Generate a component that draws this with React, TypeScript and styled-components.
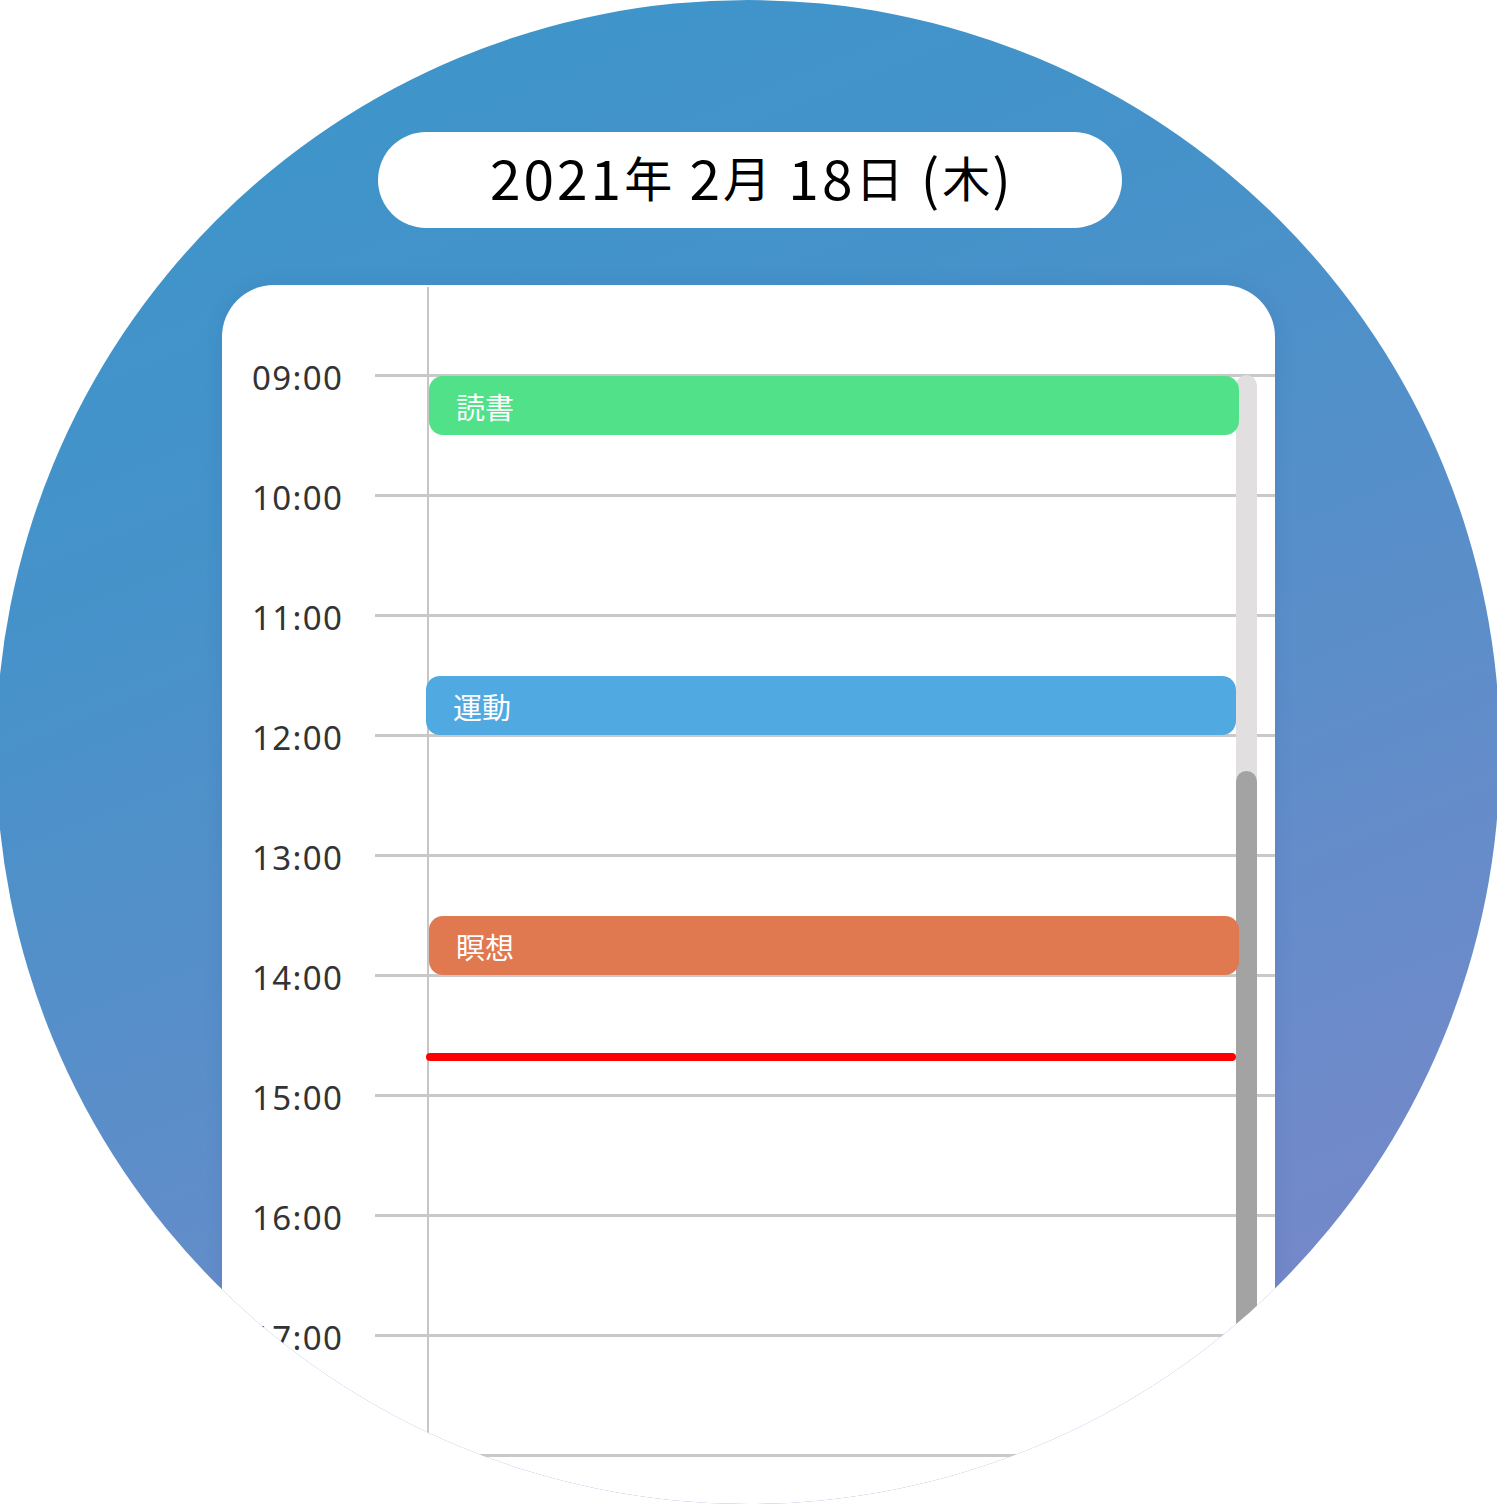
import React from "react";
import styled, { createGlobalStyle } from "styled-components";

const GlobalStyle = createGlobalStyle`
  html, body {
    margin: 0;
    padding: 0;
    background: #ffffff;
    overflow: hidden;
  }
  body {
    font-family: "Noto Sans", "Noto Sans CJK JP", sans-serif;
  }
`;

const Page = styled.div`
  width: 1497px;
  height: 1504px;
  overflow: hidden;
  background: #ffffff;
`;

const Circle = styled.div`
  width: 1504px;
  height: 1504px;
  margin-left: -4px;
  border-radius: 50%;
  overflow: hidden;
  background: linear-gradient(158deg, #3b96ca 0%, #4592c9 30%, #5d8ec9 58%, #6f8ac9 78%, #7c85c8 100%);
  display: flex;
  flex-direction: column;
  align-items: center;
`;

const DatePill = styled.div`
  margin-top: 132px;
  margin-left: 4px;
  width: 744px;
  height: 96px;
  box-sizing: border-box;
  padding-bottom: 8px;
  padding-left: 4px;
  border-radius: 48px;
  background: #ffffff;
  display: flex;
  align-items: center;
  justify-content: center;
  font-family: "Noto Sans CJK JP", "Noto Sans", sans-serif;
  font-size: 55px;
  font-weight: 400;
  color: #000000;
  letter-spacing: 3px;
  white-space: pre;
`;

const Kanji = styled.span`
  font-size: 48px;
  letter-spacing: 2px;
`;

const Card = styled.div`
  position: relative;
  margin-top: 57px;
  margin-left: 1px;
  width: 1053px;
  flex: 1;
  border-radius: 52px 52px 0 0;
  background: #ffffff;
  overflow: hidden;
  box-shadow: 0 0 18px rgba(40, 70, 140, 0.12);
`;

const TopSpacer = styled.div`
  height: 89px;
`;

const HourRow = styled.div`
  display: flex;
  align-items: flex-start;
  height: 120px;
`;

const HourLabel = styled.div`
  width: 153px;
  box-sizing: border-box;
  padding-left: 30px;
  margin-top: -16px;
  height: 40px;
  line-height: 40px;
  font-family: "Noto Sans", sans-serif;
  font-size: 33px;
  letter-spacing: 1.4px;
  color: #333333;
`;

const HourLine = styled.div`
  flex: 1;
  height: 120px;
  box-sizing: border-box;
  border-top: 3px solid #c9c9c9;
`;

const Lane = styled.div`
  position: absolute;
  left: 205px;
  top: 2px;
  bottom: 0;
  width: 830px;
  border-left: 2px solid #c6c6c6;
`;

const EventBar = styled.div<{ $color: string }>`
  position: absolute;
  width: 810px;
  height: 59px;
  border-radius: 14px;
  background: ${(p) => p.$color};
  box-sizing: border-box;
  padding-left: 27px;
  display: flex;
  align-items: center;
  font-family: "Noto Sans CJK JP", sans-serif;
  font-size: 29px;
  font-weight: 400;
  color: #ffffff;
`;

const NowLine = styled.div`
  position: absolute;
  width: 810px;
  height: 8px;
  border-radius: 4px;
  background: #ff0000;
`;

const ScrollTrack = styled.div`
  position: absolute;
  left: 1014px;
  top: 90px;
  bottom: 0;
  width: 21px;
  border-radius: 11px 11px 0 0;
  background: #e1dfe0;
  display: flex;
  flex-direction: column;
`;

const ScrollThumb = styled.div`
  flex: 1;
  border-radius: 11px 11px 0 0;
  background: #a3a3a3;
`;

const hours = ["09:00", "10:00", "11:00", "12:00", "13:00", "14:00", "15:00", "16:00", "17:00", "18:00"];

// lane coordinates: 09:00 at y=88, 2px per minute
const START = 88;
const PX_PER_MIN = 2;

const events = [
  { title: "読書", min: 0, color: "#51e189", dx: 0 },
  { title: "運動", min: 150, color: "#50a9e0", dx: -3 },
  { title: "瞑想", min: 270, color: "#e07850", dx: 0 },
];

const nowMin = 339;
const scrollOffset = 396;

export default function App() {
  return (
    <Page>
      <GlobalStyle />
      <Circle>
        <DatePill>
          2021<Kanji>年</Kanji> 2<Kanji>月</Kanji> 18<Kanji>日</Kanji> (<Kanji>木</Kanji>)
        </DatePill>
        <Card>
          <TopSpacer />
          {hours.map((h) => (
            <HourRow key={h}>
              <HourLabel>{h}</HourLabel>
              <HourLine />
            </HourRow>
          ))}
          <ScrollTrack>
            <ScrollThumb style={{ marginTop: scrollOffset }} />
          </ScrollTrack>
          <Lane>
            {events.map((e) => (
              <EventBar
                key={e.title}
                $color={e.color}
                style={{ top: START + 1 + e.min * PX_PER_MIN, left: e.dx }}
              >
                {e.title}
              </EventBar>
            ))}
            <NowLine style={{ top: START + nowMin * PX_PER_MIN, left: -3 }} />
          </Lane>
        </Card>
      </Circle>
    </Page>
  );
}
